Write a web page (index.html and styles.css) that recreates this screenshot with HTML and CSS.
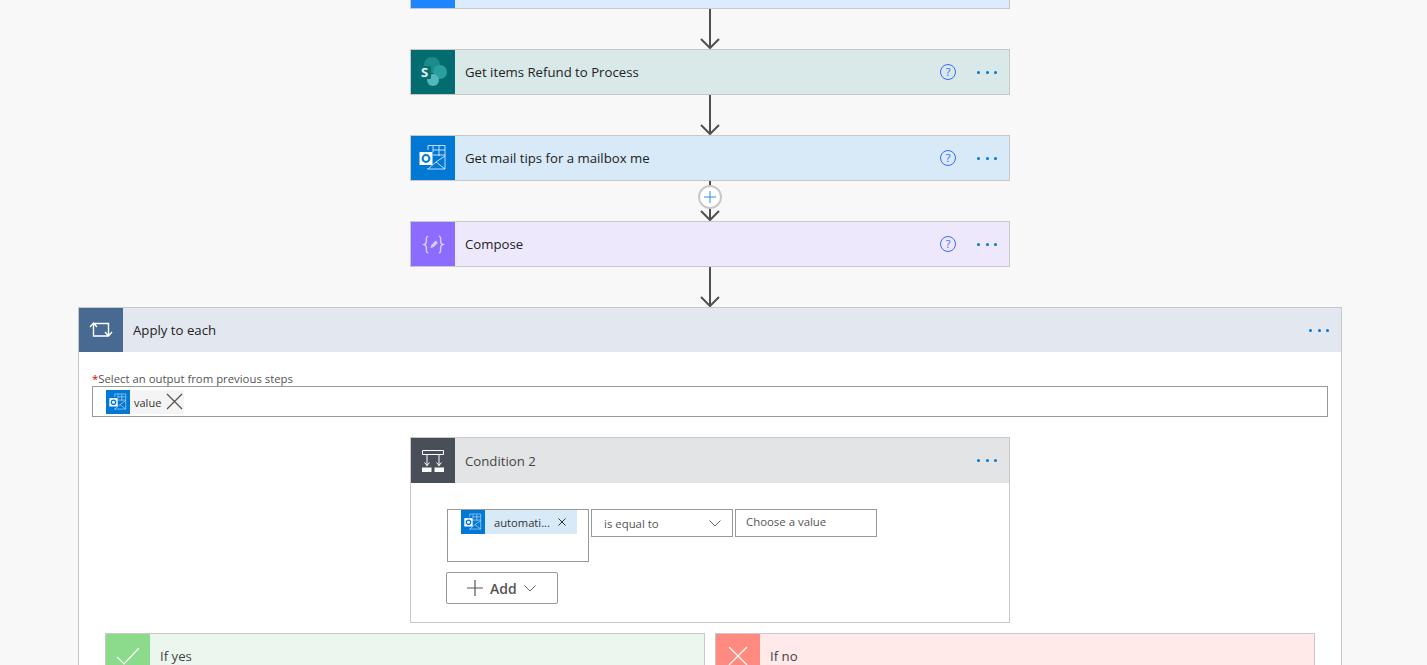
FILE: index.html
```html
<!DOCTYPE html>
<html lang="en">
<head>
    <meta charset="UTF-8">
    <title>Edit flow</title>
    <link rel="stylesheet" href="styles.css">
</head>
<body>
    <svg class="icon-defs" width="0" height="0">
        <symbol id="outlook" viewBox="0 0 28 28">
            <path d="M9 6V1.5h17V25H8" fill="none" stroke="#fff" stroke-opacity=".75" stroke-width="1"/>
            <path d="M14 2v6M20 2v10M14 6h12M14 11h12" stroke="#fff" stroke-opacity=".75" stroke-width="1"/>
            <path d="M9 25l8-7 9-6M17 18l9 7" fill="none" stroke="#fff" stroke-opacity=".75" stroke-width="1"/>
            <rect x="0.5" y="8" width="13" height="13" fill="#fff"/>
            <circle cx="7" cy="14.5" r="3.4" fill="none" stroke="#0078d4" stroke-width="2"/>
        </symbol>
    </svg>

    <main class="canvas">
        <section class="card card-blue">
            <div class="card-icon"></div>
            <div class="card-title"></div>
        </section>
        <div class="connector"><svg width="20" height="40"><path d="M10 0v39M1 30l9 9 9-9" fill="none" stroke="#505050" stroke-width="2"/></svg></div>

        <section class="card card-teal">
            <div class="card-icon">
                <svg width="32" height="32" viewBox="0 0 32 32">
                    <circle cx="15" cy="9" r="8" fill="#1d8a8c"/>
                    <circle cx="23" cy="16" r="7" fill="#2b9ea0"/>
                    <circle cx="16" cy="24" r="6" fill="#52b8ba"/>
                    <rect x="1" y="10" width="13" height="13" rx="1" fill="#0b6e71"/>
                    <text x="7.5" y="21" class="logo-letter">S</text>
                </svg>
            </div>
            <div class="card-title">Get items Refund to Process</div>
            <span class="help">?</span>
            <span class="dots"><i></i><i></i><i></i></span>
        </section>
        <div class="connector"><svg width="20" height="40"><path d="M10 0v39M1 30l9 9 9-9" fill="none" stroke="#505050" stroke-width="2"/></svg></div>

        <section class="card card-outlook">
            <div class="card-icon"><svg width="28" height="28"><use href="#outlook"/></svg></div>
            <div class="card-title">Get mail tips for a mailbox me</div>
            <span class="help">?</span>
            <span class="dots"><i></i><i></i><i></i></span>
        </section>
        <div class="connector">
            <svg width="20" height="40"><path d="M10 0v39M1 30l9 9 9-9" fill="none" stroke="#505050" stroke-width="2"/></svg>
            <span class="add-step">
                <svg width="12" height="12"><path d="M6 0v12M0 6h12" stroke="#2f8fe0" stroke-width="1"/></svg>
            </span>
        </div>

        <section class="card card-purple">
            <div class="card-icon">
                <svg width="23" height="23" viewBox="0 0 26 26" fill="none" stroke="#d9ccff" stroke-width="1.6">
                    <path d="M7 3.5C4.5 3.5 5 6 5 9c0 2.5-1 3.5-2.5 4C4 13.5 5 14.5 5 17c0 3-.5 5.5 2 5.5"/>
                    <path d="M19 3.5c2.5 0 2 2.5 2 5.5 0 2.5 1 3.5 2.5 4-1.5.5-2.5 1.5-2.5 4 0 3 .5 5.5-2 5.5"/>
                    <path d="M9.5 17l1-3.5 5-5 2.5 2.5-5 5z" fill="#d9ccff" stroke="none"/>
                </svg>
            </div>
            <div class="card-title">Compose</div>
            <span class="help">?</span>
            <span class="dots"><i></i><i></i><i></i></span>
        </section>
        <div class="connector"><svg width="20" height="40"><path d="M10 0v39M1 30l9 9 9-9" fill="none" stroke="#505050" stroke-width="2"/></svg></div>

        <section class="scope">
            <header class="card-head head-loop">
                <div class="card-icon">
                    <svg width="24" height="20" viewBox="0 0 24 20" fill="none" stroke="#fff" stroke-width="1.4">
                        <path d="M1 7l3.5-4L8 7M4.5 3.5V16H19M23 12l-3.5 4L16 12M19.5 16V3.5H5"/>
                    </svg>
                </div>
                <div class="card-title">Apply to each</div>
                <span class="dots"><i></i><i></i><i></i></span>
            </header>
            <div class="scope-body">
                <label class="field-label"><span class="req">*</span>Select an output from previous steps</label>
                <div class="output-box">
                    <span class="token">
                        <span class="token-icon"><svg width="18" height="18"><use href="#outlook"/></svg></span>
                        <span class="token-text">value</span>
                        <svg class="token-x" width="17" height="17"><path d="M1 1l15 15M16 1L1 16" stroke="#555" stroke-width="1.3"/></svg>
                    </span>
                </div>

                <section class="condition">
                    <header class="card-head head-condition">
                        <div class="card-icon">
                            <svg width="24" height="24" viewBox="0 0 24 24" fill="none" stroke="#fff" stroke-width="1">
                                <path d="M1.5 1.5h21v4h-21zM6 5.5V17M18 5.5V17M3.5 13.5l2.500 3 2.500-3M15.500 13.500l2.500 3 2.500-3"/>
                                <path d="M1 18.5h9.500V23H1zM13.500 18.500H23V23h-9.500z" fill="#fff" stroke="none"/>
                            </svg>
                        </div>
                        <div class="card-title">Condition 2</div>
                        <span class="dots"><i></i><i></i><i></i></span>
                    </header>
                    <div class="condition-body">
                        <div class="condition-row">
                            <div class="operand">
                                <span class="pill">
                                    <span class="token-icon"><svg width="18" height="18"><use href="#outlook"/></svg></span>
                                    <span class="pill-text">automati...</span>
                                    <svg class="pill-x" width="8" height="8"><path d="M.5.5l7 7M7.5.5l-7 7" stroke="#333" stroke-width="1"/></svg>
                                </span>
                            </div>
                            <div class="select">
                                <span>is equal to</span>
                                <svg width="12" height="7"><path d="M.5.5L6 6l5.5-5.5" fill="none" stroke="#666" stroke-width="1"/></svg>
                            </div>
                            <div class="value-input">Choose a value</div>
                        </div>
                        <button class="add-btn">
                            <svg width="16" height="16"><path d="M8 0v16M0 8h16" stroke="#555" stroke-width="1.2"/></svg>
                            <span>Add</span>
                            <svg width="12" height="7"><path d="M.5.5L6 6l5.5-5.5" fill="none" stroke="#666" stroke-width="1"/></svg>
                        </button>
                    </div>
                </section>

                <div class="branches">
                    <section class="card card-yes">
                        <div class="card-icon">
                            <svg width="24" height="18"><path d="M1 10l7 7L23 1" fill="none" stroke="#fff" stroke-width="1.2"/></svg>
                        </div>
                        <div class="card-title">If yes</div>
                    </section>
                    <section class="card card-no">
                        <div class="card-icon">
                            <svg width="20" height="20"><path d="M1 1l18 18M19 1L1 19" stroke="#fff" stroke-width="1.2"/></svg>
                        </div>
                        <div class="card-title">If no</div>
                    </section>
                </div>
            </div>
        </section>
    </main>
</body>
</html>
```

FILE: styles.css
```css
html, body {
    height: 100%;
}
body {
    margin: 0;
    overflow: hidden;
    background-color: #f8f8f8;
    font-family: "Open Sans", Arial, sans-serif;
    color: #222;
}
.icon-defs {
    display: block;
    height: 0;
}
.canvas {
    display: flex;
    flex-direction: column;
    align-items: center;
    margin-top: -37px;
    width: 1420px;
}
.card {
    display: flex;
    align-items: center;
    flex: none;
    width: 600px;
    height: 46px;
    box-sizing: border-box;
    border: 1px solid #c8c8c8;
}
.card-icon {
    display: flex;
    align-items: center;
    justify-content: center;
    flex: none;
    width: 44px;
    height: 100%;
}
.card-title {
    flex: 1;
    padding-left: 10px;
    font-size: 13.2px;
}
.connector {
    position: relative;
    display: flex;
    justify-content: center;
    flex: none;
    height: 40px;
}
.add-step {
    position: absolute;
    top: 4px;
    left: -2px;
    display: flex;
    align-items: center;
    justify-content: center;
    width: 20px;
    height: 20px;
    background-color: #fff;
    border: 2px solid #c8c8c8;
    border-radius: 50%;
}
.help {
    width: 14px;
    height: 14px;
    margin-right: 21px;
    border: 1px solid #3a6cf0;
    border-radius: 50%;
    color: #3a6cf0;
    font-size: 11px;
    line-height: 14px;
    text-align: center;
}
.dots {
    display: flex;
    gap: 5.5px;
    margin-right: 12px;
}
.dots i {
    width: 3px;
    height: 3px;
    border-radius: 50%;
    background-color: #0078d4;
}
.logo-letter {
    fill: #e4f4f4;
    font-family: "Open Sans", Arial, sans-serif;
    font-size: 13px;
    font-weight: 700;
    text-anchor: middle;
}

.card-blue { background-color: #dcebff; }
.card-blue .card-icon { background-color: #1f85ff; }
.card-teal { background-color: #d9e8e8; }
.card-teal .card-icon { background-color: #036c70; }
.card-outlook { background-color: #d8e9f7; }
.card-outlook .card-icon { background-color: #0078d4; }
.card-purple { background-color: #eee8fd; }
.card-purple .card-icon { background-color: #8c6cff; }
.card-yes { background-color: #ebf7ee; align-items: flex-start; height: 80px; }
.card-yes .card-icon { background-color: #8cdb8c; height: 44px; }
.card-no { background-color: #ffe9e9; align-items: flex-start; height: 80px; }
.card-no .card-icon { background-color: #ff8a80; height: 44px; }
.card-yes .card-title,
.card-no .card-title { padding-top: 13px; color: #444; }

.scope {
    flex: none;
    width: 1264px;
    box-sizing: border-box;
    background-color: #fff;
    border: 1px solid #c8c8c8;
}
.card-head {
    display: flex;
    align-items: center;
    height: 44px;
}
.head-loop { background-color: #e3e7ef; }
.head-loop .card-icon { background-color: #486991; }
.head-condition { background-color: #e3e4e6; height: 45px; }
.head-condition .card-title { color: #444; }
.head-condition .card-icon { background-color: #484f58; }
.scope-body {
    padding: 20px 13px 0;
}
.field-label {
    display: block;
    height: 14px;
    font-size: 11.35px;
    line-height: 14px;
    color: #555;
}
.req {
    color: #c00;
}
.output-box {
    display: flex;
    align-items: center;
    height: 31px;
    box-sizing: border-box;
    padding-left: 13px;
    border: 1px solid #999;
}
.token {
    display: flex;
    align-items: center;
    height: 24px;
    padding-right: 1px;
    background-color: #f4f4f4;
}
.token-icon {
    display: flex;
    align-items: center;
    justify-content: center;
    flex: none;
    width: 24px;
    height: 24px;
    background-color: #0078d4;
}
.token-text {
    margin: 1px 5px 0 4px;
    font-size: 11px;
    color: #333;
}
.condition {
    width: 600px;
    box-sizing: border-box;
    margin: 20px auto 0;
    border: 1px solid #c8c8c8;
}
.condition-body {
    padding: 26px 0 18px 35px;
}
.condition-row {
    display: flex;
    gap: 2px;
    align-items: flex-start;
    margin-left: 1px;
}
.operand {
    width: 142px;
    height: 53px;
    box-sizing: border-box;
    padding-left: 13px;
    border: 1px solid #999;
}
.pill {
    display: flex;
    align-items: center;
    width: 116px;
    height: 24px;
    background-color: #d8e9f7;
}
.pill-text {
    flex: 1;
    padding-left: 9px;
    font-size: 11.2px;
    color: #333;
}
.pill-x {
    margin-right: 11px;
}
.select,
.value-input {
    display: flex;
    align-items: center;
    width: 142px;
    height: 28px;
    box-sizing: border-box;
    border: 1px solid #999;
    font-size: 11.4px;
    color: #555;
}
.select {
    justify-content: space-between;
    padding: 0 11px 0 12px;
}
.value-input {
    padding: 0 0 3px 10px;
}
.add-btn {
    display: flex;
    align-items: center;
    gap: 7px;
    width: 112px;
    height: 32px;
    box-sizing: border-box;
    margin-top: 10px;
    padding: 0 0 0 20px;
    background-color: #fff;
    border: 1px solid #999;
    border-radius: 2px;
    font-family: inherit;
    font-size: 14px;
    font-weight: 600;
    color: #555;
}
.branches {
    display: flex;
    justify-content: center;
    gap: 10px;
    margin-top: 10px;
}
```
